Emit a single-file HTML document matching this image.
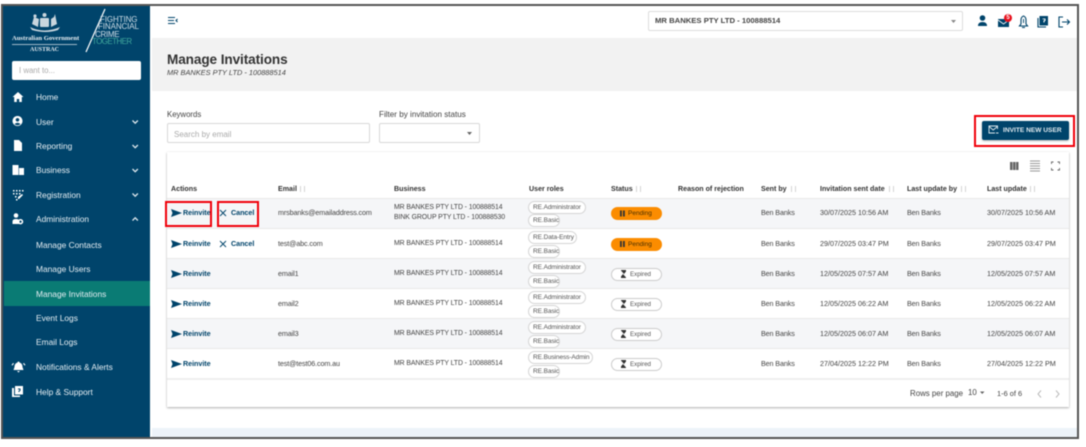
<!DOCTYPE html>
<html><head><meta charset="utf-8"><title>Manage Invitations</title>
<style>
html,body{margin:0;padding:0;background:#fff}
#p{position:relative;width:1086px;height:447px;overflow:hidden;background:#fff;font-family:"Liberation Sans",sans-serif;color:#444;filter:blur(.4px)}
#p div,#p span.t,#p svg{position:absolute}
.t{position:absolute;white-space:nowrap;line-height:12px;font-size:7.2px}
.n{color:#e4edf2;font-size:8.4px;left:36px}
.h{font-weight:bold;color:#333;top:183px;font-size:7.1px}
.a{font-weight:bold;color:#00446b;font-size:7.2px;letter-spacing:-.05px}
.e{letter-spacing:-.12px}
.b{font-size:6.9px;letter-spacing:-.08px}
.c{box-sizing:border-box;left:528px;height:13px;border:1px solid #d5d5d5;border-radius:7px;background:#fff;font-size:6.5px;letter-spacing:-.08px;line-height:11px;padding-left:4px;color:#555;white-space:nowrap}
.s{box-sizing:border-box;left:611px;width:51px;height:13px;border-radius:7px;font-size:6.5px;line-height:13px;white-space:nowrap}
.pe{background:#fb8c00;color:#4a3000;padding-left:17px}
.ex{background:#fff;border:1px solid #ccc;color:#555;padding-left:18px;font-size:6.2px;line-height:11px}
.r{left:167px;width:902px;height:30px;border-bottom:1px solid #e8e8e8;box-sizing:border-box}
.g{background:#f5f6f8}
.o{top:186px;width:5px;height:6px;border-left:1px solid #d5d5d5;border-right:1px solid #d5d5d5;box-sizing:border-box}
</style></head><body><div id="p">
<!-- frame -->
<div style="left:1px;top:4px;width:1078px;height:435px;background:#555"></div>
<div style="left:3px;top:6px;width:1074px;height:431px;background:#fff"></div>
<!-- bands -->
<div style="left:152px;top:38px;width:925px;height:53px;background:#f2f2f2"></div>
<div style="left:152px;top:428px;width:925px;height:9px;background:#edf3f9"></div>
<!-- sidebar -->
<div style="left:3px;top:6px;width:147px;height:431px;background:#00446b"></div>
<div style="left:4px;top:281px;width:146px;height:25px;background:#0a7b74"></div>
<!-- logo -->
<svg style="left:26px;top:9px" width="38" height="26" viewBox="0 0 38 26"><g fill="#c9d6de"><rect x="14" y="9" width="9" height="9" rx="1"/><circle cx="9" cy="7" r="1.600"/><path d="M8 8l-2 7 6 3 1-8zM29 5l-1 3-3 2 0 8 6-3z"/><circle cx="18.500" cy="6" r="2"/><path d="M4 18q14 7 30 0l-2 3q-12 4-26 0z"/></g></svg>
<span class="t" style="left:12px;top:33px;font-family:'Liberation Serif',serif;font-weight:bold;font-size:6.600px;color:#e8eef2">Australian Government</span>
<div style="left:12px;top:44px;width:65px;height:1px;background:#9fb8c7"></div>
<span class="t" style="left:30px;top:44px;font-family:'Liberation Serif',serif;font-weight:bold;font-size:6px;color:#e8eef2">AUSTRAC</span>
<svg style="left:84px;top:7px" width="24" height="46" viewBox="0 0 24 46"><path d="M21 2L2 45" stroke="#fff" stroke-width="1.200"/></svg>
<span class="t" style="left:100px;top:14px;font-size:8px;letter-spacing:-.1px;color:#cfdde6">FIGHTING</span>
<span class="t" style="left:98px;top:21px;font-size:8px;letter-spacing:-.1px;color:#cfdde6">FINANCIAL</span>
<span class="t" style="left:95px;top:29px;font-size:8px;letter-spacing:-.3px;color:#cfdde6">CRIME</span>
<span class="t" style="left:92px;top:36px;font-size:8px;letter-spacing:-.6px;color:#3fa79c">TOGETHER</span>
<!-- I want to -->
<div style="left:12px;top:61px;width:129px;height:19px;background:#fff;border-radius:2px"></div>
<span class="t" style="left:19px;top:65px;font-size:7.800px;color:#aaa">I want to...</span>
<!-- nav text -->
<span class="t n" style="top:91px">Home</span>
<span class="t n" style="top:116px">User</span>
<span class="t n" style="top:140px">Reporting</span>
<span class="t n" style="top:164px">Business</span>
<span class="t n" style="top:189px">Registration</span>
<span class="t n" style="top:213px">Administration</span>
<span class="t n" style="top:239px">Manage Contacts</span>
<span class="t n" style="top:263px">Manage Users</span>
<span class="t n" style="top:288px">Manage Invitations</span>
<span class="t n" style="top:312px">Event Logs</span>
<span class="t n" style="top:336px">Email Logs</span>
<span class="t n" style="top:361px">Notifications &amp; Alerts</span>
<span class="t n" style="top:386px">Help &amp; Support</span>
<!-- nav icons -->
<svg style="left:0;top:0" width="150" height="447" viewBox="0 0 150 447">
<g fill="#fff">
<path d="M18 92l-5.500 5h1.700v5h2.600v-3h2.400v3h2.600v-5h1.700z"/>
<path fill-rule="evenodd" d="M17.500 116a5 5 0 1 0 .01 0zM17.500 118a1.800 1.800 0 1 1-.01 0zM14.500 124q3-2.500 6 0q-3 2.500-6 0z"/>
<path d="M14 140h5l3 3v8h-8z"/>
<path d="M12.500 165h6v10h-6zM19 168h5v7h-5z"/>
<path d="M13 190h1.500v1.500H13zM16 190h1.500v1.500H16zM19 190h1.500v1.500H19zM22 190h1.500v1.500H22zM13 193h1.500v1.500H13zM16 193h1.500v1.500H16zM19 193h1.500v1.500H19zM15 196h1.500v1.500H15zM18 197l4-3 1 1-4 4h-1zM16 199h1.500v1.500H16z"/>
<circle cx="16" cy="215.500" r="2.300"/><path d="M12.500 224v-2.500q0-2.500 3.500-2.500t3.500 2.500v2.500z"/>
<path fill-rule="evenodd" d="M20.500 219a2.700 2.700 0 1 0 .01 0zM20.500 220.500a1.200 1.200 0 1 1-.01 0z"/>
<path d="M17.500 362.500a1 1 0 0 1 2 0q3 1 3 4.500l1 3h-10l1-3q0-3.500 3-4.500zM17 371h3l-1.500 1.500zM13 363l-1.500 2 1 .5 1.500-2zM24 363l1.500 2-1 .5-1.500-2z"/>
<path d="M12 388h2v7.500h6v1.500h-8z"/><path fill-rule="evenodd" d="M15 386h8v8.500h-8zM18 388.500h2.500v2.500h-1v1h-1v-1.500h1v-1h-1.500z"/>
</g>
<g fill="none" stroke="#dbe6ec" stroke-width="1.300"><path d="M132.500 120.500l2.700 2.700 2.700-2.700M132.500 145l2.700 2.700 2.700-2.700M132.500 169l2.700 2.700 2.700-2.700M132.500 193.500l2.700 2.700 2.700-2.700M132.500 220.500l2.700-2.700 2.700 2.700"/></g>
</svg>
<!-- top bar -->
<svg style="left:167px;top:16px" width="12" height="10" viewBox="0 0 12 10"><path d="M1 1.500h7M1 4.500h6M1 7.500h7M10.500 3L9 4.500 10.500 6" fill="none" stroke="#00446b" stroke-width="1.100"/></svg>
<div style="left:648px;top:11px;width:315px;height:20px;box-sizing:border-box;border:1px solid #ddd;border-radius:2px;background:#fff"></div>
<span class="t" style="left:655px;top:15px;font-weight:bold;font-size:7.700px;color:#444">MR BANKES PTY LTD - 100888514</span>
<svg style="left:950px;top:19px" width="8" height="5"><path d="M1 1h5L3.500 4z" fill="#888"/></svg>
<svg style="left:976px;top:10px" width="96" height="20" viewBox="0 0 96 20">
<g fill="#00446b">
<circle cx="6.500" cy="8" r="2.800"/><path d="M2 16q0-4 4.500-4t4.500 4z"/>
<path d="M22 9h11v8H22z"/>
</g>
<path d="M22 10l5.500 4 5.500-4" stroke="#fff" stroke-width=".8" fill="none"/>
<g fill="none" stroke="#00446b" stroke-width="1.100">
<path d="M43.500 16l1.500-2v-4q0-3 2.500-4q2.500 1 2.500 4v4l1.500 2zM46 17.500h3"/>
<path d="M47.500 9v4" stroke-width=".9"/>
<path d="M62 8v9h8"/>
<path d="M87 7h-4v10h4M86 12h7M91 9.500l2.500 2.500-2.500 2.500"/>
</g>
<path fill="#00446b" fill-rule="evenodd" d="M63.500 6h8.500v9.500h-8.500zM66.500 8.500h3v2.500h-1v1.500h-1v-2.200h1v-1h-2z"/>
</svg>
<div style="left:1004px;top:14px;width:8px;height:8px;border-radius:4px;background:#e8101c;color:#fff;font-size:6px;font-weight:bold;line-height:8px;text-align:center">5</div>
<!-- heading -->
<span class="t" style="left:167px;top:52px;font-size:13.600px;letter-spacing:-.1px;line-height:15px;font-weight:bold;color:#333">Manage Invitations</span>
<span class="t" style="left:167px;top:67px;font-size:7.400px;font-style:italic;color:#444">MR BANKES PTY LTD - 100888514</span>
<!-- filters -->
<span class="t" style="left:167px;top:109px;font-size:7.800px;color:#444">Keywords</span>
<div style="left:167px;top:123px;width:203px;height:20px;box-sizing:border-box;border:1px solid #d8d8d8;border-radius:2px"></div>
<span class="t" style="left:174px;top:129px;font-size:8px;color:#aaa">Search by email</span>
<span class="t" style="left:379px;top:109px;font-size:8.100px;color:#444">Filter by invitation status</span>
<div style="left:379px;top:123px;width:101px;height:20px;box-sizing:border-box;border:1px solid #d8d8d8;border-radius:2px"></div>
<svg style="left:466px;top:131px" width="8" height="5"><path d="M1 1h5L3.500 4z" fill="#666"/></svg>
<!-- invite button -->
<div style="left:974px;top:115px;width:101px;height:32px;box-sizing:border-box;border:2px solid #f0000a"></div>
<div style="left:982px;top:121px;width:87px;height:19px;background:#00446b;border-radius:2px;box-shadow:0 1px 2px rgba(0,0,0,.3)"></div>
<svg style="left:988px;top:125px" width="11" height="10" viewBox="0 0 11 10"><path d="M9.500 4V1H1v7h6M1 1.500L5.200 5l4.300-3.500M8 8h2.500" fill="none" stroke="#dfe9ee" stroke-width=".9"/></svg>
<span class="t" style="left:1003px;top:125px;font-size:6.600px;font-weight:bold;color:#dfe9ee">INVITE NEW USER</span>
<!-- card -->
<div style="left:167px;top:152px;width:902px;height:255px;background:#fff;box-shadow:0 1px 2px rgba(0,0,0,.3),0 0 2px rgba(0,0,0,.06)"></div>
<svg style="left:1008px;top:160px" width="54" height="13" viewBox="0 0 54 13">
<path d="M2 2h2.500v8H2zM5 2h2.500v8H5zM8 2h2.500v8H8z" fill="#666"/>
<path d="M22 1h10M22 3.500h10M22 6h10M22 8.500h10M22 11h10" stroke="#777" stroke-width=".8"/>
<path d="M43.500 4V2h2M49.500 2h2v2M43.500 8v2h2M49.500 10h2V8" fill="none" stroke="#666" stroke-width=".9"/>
</svg>
<!-- header -->
<span class="t h" style="left:171px">Actions</span>
<span class="t h" style="left:278px">Email</span><div class="o" style="left:300px"></div>
<span class="t h" style="left:394px">Business</span>
<span class="t h" style="left:529px">User roles</span>
<span class="t h" style="left:611px">Status</span><div class="o" style="left:636px"></div>
<span class="t h" style="left:678px">Reason of rejection</span>
<span class="t h" style="left:761px">Sent by</span><div class="o" style="left:791px"></div>
<span class="t h" style="left:820px">Invitation sent date</span><div class="o" style="left:889px"></div>
<span class="t h" style="left:907px">Last update by</span><div class="o" style="left:961px"></div>
<span class="t h" style="left:987px">Last update</span><div class="o" style="left:1030px"></div>
<!-- rows -->
<div class="r g" style="top:198px;height:31px;border-top:1px solid #e8e8e8"></div>
<div class="r" style="top:229px"></div>
<div class="r g" style="top:259px"></div>
<div class="r" style="top:289px"></div>
<div class="r g" style="top:319px"></div>
<div class="r" style="top:349px;height:31px;border-bottom:2px solid #eee"></div>
<!-- send icons -->
<svg style="left:171px;top:0" width="12" height="447" viewBox="0 0 12 447"><g fill="#00446b"><path d="M0 209l11 4-11 4 1.500-4z"/><path d="M0 240l11 4-11 4 1.500-4zM0 270l11 4-11 4 1.500-4zM0 300l11 4-11 4 1.500-4zM0 330l11 4-11 4 1.500-4zM0 360l11 4-11 4 1.500-4z"/></g></svg>
<svg style="left:219px;top:0" width="10" height="260" viewBox="0 0 10 260"><path d="M1 210l6 6M7 210l-6 6M1 241l6 6M7 241l-6 6" stroke="#00446b" stroke-width=".9"/></svg>
<!-- row1 -->
<span class="t a" style="left:183px;top:207px">Reinvite</span><span class="t a" style="left:231px;top:207px">Cancel</span>
<span class="t e" style="left:278px;top:207px">mrsbanks@emailaddress.com</span>
<span class="t b" style="left:394px;top:202px">MR BANKES PTY LTD - 100888514</span>
<span class="t b" style="left:394px;top:212px">BINK GROUP PTY LTD - 100888530</span>
<div class="c" style="top:201px;width:58px">RE.Administrator</div><div class="c" style="top:214px;width:32px">RE.Basic</div>
<div class="s pe" style="top:207px">Pending</div>
<span class="t e" style="left:761px;top:207px">Ben Banks</span><span class="t" style="left:820px;top:207px">30/07/2025 10:56 AM</span><span class="t e" style="left:907px;top:207px">Ben Banks</span><span class="t" style="left:987px;top:207px">30/07/2025 10:56 AM</span>
<!-- row2 -->
<span class="t a" style="left:183px;top:238px">Reinvite</span><span class="t a" style="left:231px;top:238px">Cancel</span>
<span class="t e" style="left:278px;top:238px">test@abc.com</span>
<span class="t b" style="left:394px;top:238px">MR BANKES PTY LTD - 100888514</span>
<div class="c" style="top:231px;width:49px">RE.Data-Entry</div><div class="c" style="top:245px;width:32px">RE.Basic</div>
<div class="s pe" style="top:238px">Pending</div>
<span class="t e" style="left:761px;top:238px">Ben Banks</span><span class="t" style="left:820px;top:238px">29/07/2025 03:47 PM</span><span class="t e" style="left:907px;top:238px">Ben Banks</span><span class="t" style="left:987px;top:238px">29/07/2025 03:47 PM</span>
<!-- row3 -->
<span class="t a" style="left:183px;top:268px">Reinvite</span>
<span class="t e" style="left:278px;top:268px">email1</span>
<span class="t b" style="left:394px;top:268px">MR BANKES PTY LTD - 100888514</span>
<div class="c" style="top:261px;width:58px">RE.Administrator</div><div class="c" style="top:275px;width:32px">RE.Basic</div>
<div class="s ex" style="top:268px">Expired</div>
<span class="t e" style="left:761px;top:268px">Ben Banks</span><span class="t" style="left:820px;top:268px">12/05/2025 07:57 AM</span><span class="t e" style="left:907px;top:268px">Ben Banks</span><span class="t" style="left:987px;top:268px">12/05/2025 07:57 AM</span>
<!-- row4 -->
<span class="t a" style="left:183px;top:298px">Reinvite</span>
<span class="t e" style="left:278px;top:298px">email2</span>
<span class="t b" style="left:394px;top:298px">MR BANKES PTY LTD - 100888514</span>
<div class="c" style="top:291px;width:58px">RE.Administrator</div><div class="c" style="top:305px;width:32px">RE.Basic</div>
<div class="s ex" style="top:298px">Expired</div>
<span class="t e" style="left:761px;top:298px">Ben Banks</span><span class="t" style="left:820px;top:298px">12/05/2025 06:22 AM</span><span class="t e" style="left:907px;top:298px">Ben Banks</span><span class="t" style="left:987px;top:298px">12/05/2025 06:22 AM</span>
<!-- row5 -->
<span class="t a" style="left:183px;top:328px">Reinvite</span>
<span class="t e" style="left:278px;top:328px">email3</span>
<span class="t b" style="left:394px;top:328px">MR BANKES PTY LTD - 100888514</span>
<div class="c" style="top:321px;width:58px">RE.Administrator</div><div class="c" style="top:335px;width:32px">RE.Basic</div>
<div class="s ex" style="top:328px">Expired</div>
<span class="t e" style="left:761px;top:328px">Ben Banks</span><span class="t" style="left:820px;top:328px">12/05/2025 06:07 AM</span><span class="t e" style="left:907px;top:328px">Ben Banks</span><span class="t" style="left:987px;top:328px">12/05/2025 06:07 AM</span>
<!-- row6 -->
<span class="t a" style="left:183px;top:358px">Reinvite</span>
<span class="t e" style="left:278px;top:358px">test@test06.com.au</span>
<span class="t b" style="left:394px;top:358px">MR BANKES PTY LTD - 100888514</span>
<div class="c" style="top:351px;width:65px">RE.Business-Admin</div><div class="c" style="top:365px;width:32px">RE.Basic</div>
<div class="s ex" style="top:358px">Expired</div>
<span class="t e" style="left:761px;top:358px">Ben Banks</span><span class="t" style="left:820px;top:358px">27/04/2025 12:22 PM</span><span class="t e" style="left:907px;top:358px">Ben Banks</span><span class="t" style="left:987px;top:358px">27/04/2025 12:22 PM</span>
<!-- status icons -->
<svg style="left:619px;top:0" width="10" height="447" viewBox="0 0 10 447">
<path d="M1 210.500h1.800v6H1zM4 210.500h1.800v6H4zM1 241h1.800v6H1zM4 241h1.800v6H4z" fill="#333"/>
<g fill="#333"><path d="M2 270h5v1.500L5 274l2 2.500V278H2v-1.500L4 274 2 271.500z"/><path d="M2 300h5v1.500L5 304l2 2.500V308H2v-1.500L4 304 2 301.500z"/><path d="M2 330h5v1.500L5 334l2 2.500V338H2v-1.500L4 334 2 331.500z"/><path d="M2 360h5v1.500L5 364l2 2.500V368H2v-1.500L4 364 2 361.500z"/></g>
<g stroke="#fff" stroke-width=".8"><path d="M1 270l7 8M1 300l7 8M1 330l7 8M1 360l7 8"/></g>
</svg>
<!-- red boxes -->
<div style="left:165px;top:201px;width:47px;height:26px;box-sizing:border-box;border:2px solid #f0000a"></div>
<div style="left:217px;top:201px;width:42px;height:26px;box-sizing:border-box;border:2px solid #f0000a"></div>
<!-- footer -->
<span class="t" style="left:910px;top:388px;font-size:7.900px">Rows per page</span>
<span class="t" style="left:968px;top:387px;font-size:7.900px">10</span>
<svg style="left:979px;top:391px" width="7" height="4"><path d="M1 .5h4.500L3.200 3z" fill="#666"/></svg>
<span class="t" style="left:997px;top:388px;font-size:7.400px">1-6 of 6</span>
<svg style="left:1036px;top:389px" width="26" height="10" viewBox="0 0 26 10"><path d="M5 1.500L2 5l3 3.500M20 1.500L23 5l-3 3.500" fill="none" stroke="#bbb" stroke-width="1"/></svg>
</div></body></html>
